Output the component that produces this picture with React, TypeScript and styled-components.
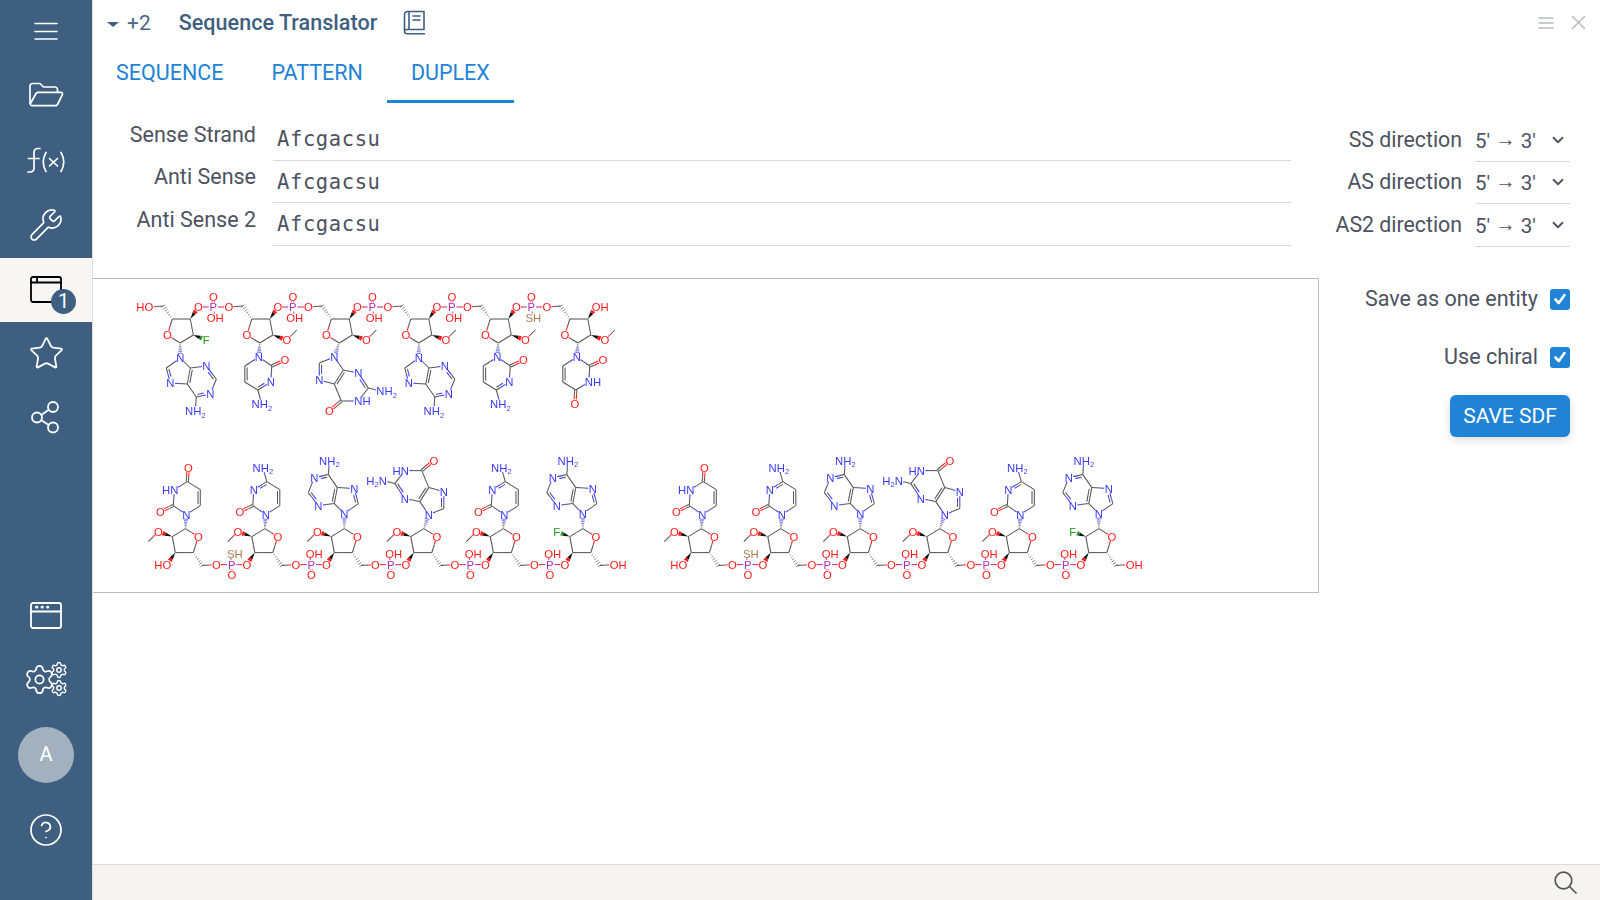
import { ReactNode } from 'react';
import styled, { createGlobalStyle } from 'styled-components';
import { ChevronDown, CircleHelp, Star, Wrench, Settings } from 'lucide-react';

const NAVY = '#3e5f80';
const BLUE = '#2083d5';
const TEXT = '#4d5261';
const LINE = '#d7d9df';

const GlobalStyle = createGlobalStyle`
  html, body {
    margin: 0;
    height: 100%;
    overflow: hidden;
    background: #fff;
    font-family: Roboto, "Liberation Sans", sans-serif;
    color: ${TEXT};
  }
`;

const Page = styled.div`
  display: flex;
  width: 1600px;
  height: 900px;
`;

const Sidebar = styled.nav`
  display: flex;
  flex-direction: column;
  justify-content: space-between;
  width: 93px;
  flex: none;
  background: ${NAVY};
  border-right: 1px solid #dedede;
  padding-bottom: 39px;
  box-sizing: border-box;
`;

const SideGroup = styled.div`
  display: flex;
  flex-direction: column;
`;

const SideItem = styled.div<{ $height?: number; $active?: boolean }>`
  position: relative;
  display: flex;
  align-items: center;
  justify-content: center;
  height: ${(p) => p.$height ?? 64.5}px;
  color: ${(p) => (p.$active ? '#000' : '#fff')};
  background: ${(p) => (p.$active ? '#f7f6f4' : 'transparent')};
`;

const Badge = styled.span`
  position: absolute;
  left: 51px;
  top: 31px;
  width: 25px;
  height: 25px;
  border-radius: 50%;
  background: ${NAVY};
  color: #fff;
  font-size: 20px;
  line-height: 25px;
  text-align: center;
`;

const Avatar = styled.div`
  width: 56px;
  height: 56px;
  border-radius: 50%;
  background: #a3b1be;
  color: #fff;
  font-size: 20px;
  line-height: 54px;
  text-align: center;
`;

const Main = styled.main`
  flex: 1;
  display: flex;
  flex-direction: column;
  min-width: 0;
`;

const TitleBar = styled.header`
  display: flex;
  align-items: center;
  height: 47px;
  padding: 0 0 2px 14px;
  box-sizing: border-box;
  color: ${NAVY};
`;

const Caret = styled.span`
  width: 0;
  height: 0;
  margin-top: 3px;
  border-left: 6px solid transparent;
  border-right: 6px solid transparent;
  border-top: 5px solid ${NAVY};
`;

const Count = styled.span`
  margin-left: 8px;
  font-size: 21px;
  color: #4a6784;
`;

const Title = styled.h1`
  margin: 0 0 0 28px;
  font-size: 21.6px;
  font-weight: 500;
`;

const BookSlot = styled.span`
  display: flex;
  margin-left: 26px;
`;

const WindowActions = styled.div`
  display: flex;
  align-items: center;
  gap: 17px;
  margin-left: auto;
  padding-right: 14px;
  color: #b9bbc2;
`;

const Tabs = styled.div`
  display: flex;
  height: 56px;
  margin-left: -1px;
`;

const Tab = styled.div<{ $active?: boolean }>`
  display: flex;
  align-items: center;
  padding: 0 24px 2px;
  font-size: 21.5px;
  color: ${BLUE};
  box-sizing: border-box;
  border-bottom: 3px solid ${(p) => (p.$active ? BLUE : 'transparent')};
`;

const Form = styled.section`
  display: flex;
  flex-direction: column;
  margin-top: 15.5px;
  padding-right: 30px;
`;

const FormRow = styled.div`
  display: grid;
  grid-template-columns: 180px 1018px 184px 95px;
  height: 42.5px;
`;

const FieldLabel = styled.label`
  padding: 1px 17px 0 0;
  font-size: 21.5px;
  line-height: 30px;
  text-align: right;
`;

const SequenceInput = styled.input`
  width: 1018px;
  height: 42px;
  box-sizing: border-box;
  border: 0;
  border-bottom: 1px solid ${LINE};
  outline: 0;
  padding: 0 0 0 4px;
  font-family: "DejaVu Sans Mono", "Liberation Mono", monospace;
  font-size: 20.5px;
  letter-spacing: 0.6px;
  color: ${TEXT};
`;

const DirectionLabel = styled(FieldLabel)`
  padding: 2px 13px 0 0;
  font-size: 21.3px;
  line-height: 38px;
`;

const Select = styled.div`
  display: flex;
  align-items: center;
  justify-content: space-between;
  height: 43px;
  box-sizing: border-box;
  border-bottom: 1px solid ${LINE};
  padding: 0 3px 0 0;
  font-size: 20.5px;
  white-space: pre;
`;

const Arrow = styled.span`
  vertical-align: 1.5px;
`;

const Workspace = styled.section`
  display: flex;
  margin-top: 31.5px;
`;

const Panel = styled.div`
  width: 1226px;
  height: 315px;
  box-sizing: border-box;
  border: 1px solid #b9bac2;
  border-left-width: 0;
`;

const MoleculeCanvas = styled.svg`
  display: block;
  filter: blur(0.4px);
`;

const AtomLabel = styled.text`
  font-family: "Liberation Sans", sans-serif;
  font-size: 11.3px;
`;

const Options = styled.div`
  flex: 1;
  display: flex;
  flex-direction: column;
  align-items: flex-end;
  padding-right: 30px;
  padding-top: 2.5px;
`;

const CheckRow = styled.div`
  display: flex;
  align-items: center;
  gap: 12px;
  height: 58px;
  margin-top: -11px;
  margin-bottom: 11px;
  font-size: 21.5px;
`;

const CheckBox = styled.span`
  display: flex;
  align-items: center;
  justify-content: center;
  width: 20px;
  height: 21px;
  border-radius: 3px;
  background: ${BLUE};
  margin-top: 2px;
`;

const SaveButton = styled.button`
  width: 120px;
  height: 42px;
  margin-top: -1px;
  border: 0;
  border-radius: 6px;
  background: ${BLUE};
  color: #fff;
  font-family: inherit;
  font-size: 21px;
  box-shadow: 0 3px 10px rgba(0, 0, 0, 0.14);
`;

const Spacer = styled.div`
  flex: 1;
`;

const StatusBar = styled.footer`
  display: flex;
  align-items: center;
  justify-content: flex-end;
  height: 35px;
  padding-right: 21px;
  border-top: 1px solid #dcdcdc;
  background: #f5f4f2;
  color: #555;
`;

/* ---- sidebar and header drawings ---- */

const Stroke = ({ w, h, sw = 1.7, children }: { w: number; h: number; sw?: number; children: ReactNode }) => (
  <svg width={w} height={h} viewBox={`0 0 ${w} ${h}`} fill="none" stroke="currentColor" strokeWidth={sw} strokeLinecap="round" strokeLinejoin="round">
    {children}
  </svg>
);

const MenuIcon = () => (
  <Stroke w={24} h={18} sw={1.6}>
    <path d="M1 1.5H23M1 9.5H23M1 17H23" />
  </Stroke>
);

const FolderIcon = () => (
  <Stroke w={35} h={25}>
    <path d="M1 21V4a2.5 2.5 0 0 1 2.5-2.5H11l3.5 3.5H26A2.5 2.5 0 0 1 28.5 7.5V10" />
    <path d="M1.2 22 7 11.5A2.5 2.5 0 0 1 9 10.3H32a1.6 1.6 0 0 1 1.4 2.3L28.5 22.5a2.5 2.5 0 0 1-2 1.2H3a2 2 0 0 1-1.8-1.7Z" />
  </Stroke>
);

const FunctionIcon = () => (
  <Stroke w={40} h={27}>
    <path d="M14 1.5h-2.5A3.5 3.5 0 0 0 8 5V21.5A3.5 3.5 0 0 1 4.5 25H2" />
    <path d="M2.5 11.5H13" />
    <path d="M20 5.5Q14.5 15 20 24.5M35 5.5Q40.5 15 35 24.5" />
    <path d="M23.5 11.5 31.5 19M31.5 11.5 23.5 19" />
  </Stroke>
);

const TaskbarIcon = () => (
  <Stroke w={32} h={27} sw={1.8}>
    <rect x="1" y="1" width="30" height="25" rx="2" />
    <path d="M1 6.5H31M7 1V6.5" />
  </Stroke>
);

const ShareIcon = () => (
  <Stroke w={34} h={34} sw={1.8}>
    <circle cx="24" cy="7" r="5" />
    <circle cx="8" cy="17.5" r="5" />
    <circle cx="24" cy="27.5" r="5" />
    <path d="M12.3 15 19.8 9.8M12.3 20.2 19.8 25" />
  </Stroke>
);

const BrowserIcon = () => (
  <Stroke w={32} h={27} sw={1.8}>
    <rect x="1" y="1" width="30" height="25" rx="2" />
    <path d="M1 9.5H31" />
    <path d="M6.5 5.2h.4M12 5.2h.4M17.5 5.2h.4" strokeWidth={2.8} />
  </Stroke>
);

const GearsSlot = styled.span`
  position: relative;
  display: block;
  width: 40px;
  height: 34px;
`;

const BigGear = styled.span`
  position: absolute;
  left: -3px;
  top: 1px;
  display: flex;
`;

const SmallGear = styled.span<{ $top: number }>`
  position: absolute;
  left: 24px;
  top: ${(p) => p.$top}px;
  display: flex;
`;

const GearsIcon = () => (
  <GearsSlot>
    <BigGear>
      <Settings size={33} strokeWidth={1.25} />
    </BigGear>
    <SmallGear $top={-1}>
      <Settings size={18} strokeWidth={1.9} />
    </SmallGear>
    <SmallGear $top={17}>
      <Settings size={18} strokeWidth={1.9} />
    </SmallGear>
  </GearsSlot>
);

const BookIcon = () => (
  <Stroke w={23} h={25} sw={1.6}>
    <path d="M1.5 21V4.5a3 3 0 0 1 3-3H21V19.5H4.5a3 3 0 0 0-3 1.5 2.3 2.3 0 0 0 2.3 2.7H21.5" />
    <path d="M6 2V19M10 6H17M10 10H17" />
  </Stroke>
);

const SearchIcon = () => (
  <Stroke w={26} h={26} sw={1.7}>
    <circle cx="10.5" cy="10.5" r="8.3" />
    <path d="M16.5 16.5 23 23" />
  </Stroke>
);

/* ---- molecule drawing ---- */

type El = 'C' | 'O' | 'N' | 'P' | 'F' | 'S';
type Anchor = 'start' | 'middle' | 'end';

interface Atom {
  x: number;
  y: number;
  el: El;
  label?: string;
  flipLabel?: string;
  anchor?: Anchor;
  flipAnchor?: Anchor;
  flipDx?: number;
  hidden?: boolean;
}

type Bond = [string, string, ('s' | 'd' | 'w' | 'h')?, [number, number]?];

const EL_COLORS: Record<El, string> = {
  C: '#555',
  O: '#ff1a1a',
  N: '#3a3aff',
  P: '#b02fb0',
  F: '#1f9a1f',
  S: '#a97c50',
};

const UNIT_STEP = 79.5;

const HEX: [number, number] = [28, 62];
const FIVE: [number, number] = [4, 56];

const ADENINE: { atoms: Record<string, Atom>; bonds: Bond[] } = {
  atoms: {
    N9: { x: 8, y: 39, el: 'N', label: 'N' },
    C8: { x: -6, y: 49, el: 'C' },
    N7: { x: -2, y: 64, el: 'N', label: 'N' },
    C5b: { x: 15, y: 65, el: 'C' },
    C4b: { x: 18, y: 49, el: 'C' },
    N3: { x: 34, y: 47, el: 'N', label: 'N' },
    C2b: { x: 44, y: 60, el: 'C' },
    N1: { x: 38, y: 75, el: 'N', label: 'N' },
    C6: { x: 24, y: 78, el: 'C' },
    N6: { x: 23, y: 92, el: 'N', label: 'NH2' },
  },
  bonds: [
    ['N9', 'C8'],
    ['C8', 'N7', 'd', FIVE],
    ['N7', 'C5b'],
    ['C5b', 'C4b', 'd', HEX],
    ['C4b', 'N9'],
    ['C4b', 'N3'],
    ['N3', 'C2b', 'd', HEX],
    ['C2b', 'N1'],
    ['N1', 'C6', 'd', HEX],
    ['C6', 'C5b'],
    ['C6', 'N6'],
  ],
};

const GUANINE: { atoms: Record<string, Atom>; bonds: Bond[] } = {
  atoms: {
    N9: { x: 3, y: 38, el: 'N', label: 'N' },
    C8: { x: -12, y: 44, el: 'C' },
    N7: { x: -12, y: 61, el: 'N', label: 'N' },
    C5b: { x: 3, y: 65, el: 'C' },
    C4b: { x: 12, y: 51, el: 'C' },
    N3: { x: 27, y: 54, el: 'N', label: 'N' },
    C2b: { x: 37, y: 69, el: 'C' },
    N1: { x: 27, y: 82, el: 'N', label: 'NH', flipLabel: 'HN', anchor: 'start', flipAnchor: 'end' },
    C6: { x: 10, y: 82, el: 'C' },
    O6: { x: -2, y: 92, el: 'O', label: 'O' },
    N2: { x: 49, y: 72, el: 'N', label: 'NH2', flipLabel: 'H2N', anchor: 'start', flipAnchor: 'end' },
  },
  bonds: [
    ['N9', 'C8'],
    ['C8', 'N7', 'd', [-4, 52]],
    ['N7', 'C5b'],
    ['C5b', 'C4b', 'd', [20, 68]],
    ['C4b', 'N9'],
    ['C4b', 'N3'],
    ['N3', 'C2b', 'd', [20, 68]],
    ['C2b', 'N1'],
    ['C2b', 'N2'],
    ['N1', 'C6'],
    ['C6', 'C5b'],
    ['C6', 'O6', 'd'],
  ],
};

const pyrimidine = (uracil: boolean): { atoms: Record<string, Atom>; bonds: Bond[] } => {
  const ring: [number, number] = [6, 55];
  return {
    atoms: {
      N1: { x: 7, y: 38, el: 'N', label: 'N' },
      C2b: { x: 20, y: 47, el: 'C' },
      O2b: { x: 33, y: 41, el: 'O', label: 'O' },
      N3: uracil
        ? { x: 19, y: 63, el: 'N', label: 'NH', flipLabel: 'HN', anchor: 'start', flipAnchor: 'end' }
        : { x: 19, y: 63, el: 'N', label: 'N' },
      C4b: { x: 6, y: 71, el: 'C' },
      X4: uracil ? { x: 5, y: 85, el: 'O', label: 'O' } : { x: 10, y: 85, el: 'N', label: 'NH2' },
      C5b: { x: -7, y: 63, el: 'C' },
      C6: { x: -7, y: 47, el: 'C' },
    },
    bonds: [
      ['N1', 'C2b'],
      ['C2b', 'O2b', 'd'],
      ['C2b', 'N3'],
      uracil ? ['N3', 'C4b'] : ['N3', 'C4b', 'd', ring],
      uracil ? ['C4b', 'X4', 'd'] : ['C4b', 'X4'],
      ['C4b', 'C5b'],
      ['C5b', 'C6', 'd', ring],
      ['C6', 'N1'],
    ],
  };
};

const UNITS = [
  { base: ADENINE, baseN: 'N9', fluoro: true, thio: false },
  { base: pyrimidine(false), baseN: 'N1', fluoro: false, thio: false },
  { base: GUANINE, baseN: 'N9', fluoro: false, thio: false },
  { base: ADENINE, baseN: 'N9', fluoro: false, thio: false },
  { base: pyrimidine(false), baseN: 'N1', fluoro: false, thio: true },
  { base: pyrimidine(true), baseN: 'N1', fluoro: false, thio: false },
];

const buildUnit = (index: number) => {
  const unit = UNITS[index];
  const last = index === UNITS.length - 1;
  const atoms: Record<string, Atom> = {
    C5: { x: -9, y: -13, el: 'C' },
    C4: { x: 0, y: 0, el: 'C' },
    O4: { x: -5, y: 16, el: 'O', label: 'O' },
    C1: { x: 8, y: 24, el: 'C' },
    C2: { x: 21, y: 16, el: 'C' },
    C3: { x: 18, y: 0, el: 'C' },
    O3: last
      ? { x: 26, y: -12, el: 'O', label: 'OH', flipLabel: 'HO', anchor: 'start', flipAnchor: 'end' }
      : { x: 26, y: -12, el: 'O', label: 'O' },
    O5:
      index === 0
        ? { x: -23, y: -12, el: 'O', label: 'HO', flipLabel: 'OH', anchor: 'end', flipAnchor: 'start' }
        : { x: -23, y: -12, el: 'O', label: 'O', hidden: true },
    ...unit.base.atoms,
  };
  const bonds: Bond[] = [
    ['C4', 'C5', 'h'],
    ['C5', 'O5'],
    ['C4', 'O4'],
    ['O4', 'C1'],
    ['C1', 'C2'],
    ['C2', 'C3'],
    ['C3', 'C4'],
    ['C3', 'O3', 'w'],
    ['C1', unit.baseN, 'h'],
    ...unit.base.bonds,
  ];
  if (unit.fluoro) {
    atoms.X2 = { x: 34, y: 21, el: 'F', label: 'F' };
    bonds.push(['C2', 'X2', 'w']);
  } else {
    atoms.X2 = { x: 35, y: 21, el: 'O', label: 'O' };
    atoms.Me = { x: 45, y: 11, el: 'C' };
    bonds.push(['C2', 'X2', 'w'], ['X2', 'Me']);
  }
  if (!last) {
    atoms.P = { x: 41, y: -12, el: 'P', label: 'P' };
    atoms.OP = { x: 41, y: -22, el: 'O', label: 'O' };
    atoms.XP = unit.thio
      ? { x: 43, y: -1, el: 'S', label: 'SH', flipDx: 5 }
      : { x: 43, y: -1, el: 'O', label: 'OH', flipDx: 5 };
    atoms.O5n = { x: 56.5, y: -12, el: 'O', label: 'O' };
    bonds.push(['O3', 'P'], ['P', 'OP', 'd'], ['P', 'XP'], ['P', 'O5n']);
  }
  return { atoms, bonds };
};

const renderLabel = (text: string) =>
  text.split('').map((ch, i) =>
    /\d/.test(ch) ? (
      <tspan key={i} fontSize="7.5" dy="2.5">
        {ch}
      </tspan>
    ) : (
      <tspan key={i} dy={i > 0 && /\d/.test(text[i - 1]) ? -2.5 : 0}>
        {ch}
      </tspan>
    ),
  );

const BOND_WIDTH = 1.05;

const Strand = ({ ox, oy, flip }: { ox: number; oy: number; flip?: boolean }) => {
  const items: ReactNode[] = [];
  UNITS.forEach((_, index) => {
    const { atoms, bonds } = buildUnit(index);
    const place = (x: number, y: number): [number, number] =>
      flip ? [ox - (UNIT_STEP * index + x), oy - y] : [ox + UNIT_STEP * index + x, oy + y];

    bonds.forEach(([aKey, bKey, kind = 's', center], bi) => {
      const a = atoms[aKey];
      const b = atoms[bKey];
      const [ax0, ay0] = place(a.x, a.y);
      const [bx0, by0] = place(b.x, b.y);
      const len = Math.hypot(bx0 - ax0, by0 - ay0);
      const ux = (bx0 - ax0) / len;
      const uy = (by0 - ay0) / len;
      const trimA = a.label ? 4.6 : 0;
      const trimB = b.label ? 4.6 : 0;
      const ax = ax0 + ux * trimA;
      const ay = ay0 + uy * trimA;
      const bx = bx0 - ux * trimB;
      const by = by0 - uy * trimB;
      const mx = (ax0 + bx0) / 2;
      const my = (ay0 + by0) / 2;
      const nx = -uy;
      const ny = ux;
      const ca = EL_COLORS[a.el];
      const cb = EL_COLORS[b.el];
      const key = `${ox}-${index}-${bi}`;

      const halves = (x1: number, y1: number, x2: number, y2: number, k: string) => {
        const hx = (x1 + x2) / 2;
        const hy = (y1 + y2) / 2;
        return [
          <line key={`${k}a`} x1={x1} y1={y1} x2={hx} y2={hy} stroke={ca} strokeWidth={BOND_WIDTH} />,
          <line key={`${k}b`} x1={hx} y1={hy} x2={x2} y2={y2} stroke={cb} strokeWidth={BOND_WIDTH} />,
        ];
      };

      if (kind === 's') {
        items.push(
          <line key={`${key}a`} x1={ax} y1={ay} x2={mx} y2={my} stroke={ca} strokeWidth={BOND_WIDTH} />,
          <line key={`${key}b`} x1={mx} y1={my} x2={bx} y2={by} stroke={cb} strokeWidth={BOND_WIDTH} />,
        );
      } else if (kind === 'd') {
        if (center) {
          const [cx, cy] = place(center[0], center[1]);
          const side = (cx - mx) * nx + (cy - my) * ny > 0 ? 1 : -1;
          const off = 2.3 * side;
          items.push(...halves(ax, ay, bx, by, key));
          items.push(
            ...halves(
              ax + nx * off + ux * 1.6,
              ay + ny * off + uy * 1.6,
              bx + nx * off - ux * 1.6,
              by + ny * off - uy * 1.6,
              `${key}i`,
            ),
          );
        } else {
          items.push(...halves(ax + nx * 1.1, ay + ny * 1.1, bx + nx * 1.1, by + ny * 1.1, `${key}l`));
          items.push(...halves(ax - nx * 1.1, ay - ny * 1.1, bx - nx * 1.1, by - ny * 1.1, `${key}r`));
        }
      } else if (kind === 'w') {
        const w = 2.4;
        const hw = w * (Math.hypot(mx - ax, my - ay) / Math.hypot(bx - ax, by - ay));
        items.push(
          <polygon
            key={`${key}a`}
            points={`${ax},${ay} ${mx + nx * hw},${my + ny * hw} ${mx - nx * hw},${my - ny * hw}`}
            fill="#111"
          />,
          <polygon
            key={`${key}b`}
            points={`${mx + nx * hw},${my + ny * hw} ${bx + nx * w},${by + ny * w} ${bx - nx * w},${by - ny * w} ${mx - nx * hw},${my - ny * hw}`}
            fill={cb}
          />,
        );
      } else {
        const steps = 6;
        for (let s = 1; s <= steps; s++) {
          const t = s / steps;
          const px = ax + (bx - ax) * t;
          const py = ay + (by - ay) * t;
          const half = 0.4 + 1.9 * t;
          items.push(
            <line
              key={`${key}h${s}`}
              x1={px + nx * half}
              y1={py + ny * half}
              x2={px - nx * half}
              y2={py - ny * half}
              stroke={t > 0.5 ? cb : ca}
              strokeWidth={0.7}
            />,
          );
        }
      }
    });

    Object.entries(atoms).forEach(([name, atom]) => {
      if (!atom.label || atom.hidden) return;
      const [x, y] = place(atom.x, atom.y);
      const text = flip ? atom.flipLabel ?? atom.label : atom.label;
      const anchor = (flip ? atom.flipAnchor ?? atom.anchor : atom.anchor) ?? 'middle';
      const nudge = anchor === 'start' ? -4 : anchor === 'end' ? 4 : 0;
      items.push(
        <AtomLabel
          key={`${ox}-${index}-${name}`}
          x={x + nudge + (flip ? atom.flipDx ?? 0 : 0)}
          y={y + 4}
          textAnchor={anchor}
          fill={EL_COLORS[atom.el]}
        >
          {renderLabel(text)}
        </AtomLabel>,
      );
    });
  });
  return <g>{items}</g>;
};

const FIELDS = [
  { label: 'Sense Strand', direction: 'SS direction' },
  { label: 'Anti Sense', direction: 'AS direction' },
  { label: 'Anti Sense 2', direction: 'AS2 direction' },
];

const Check = () => (
  <svg width="14" height="14" viewBox="0 0 14 14" fill="none" stroke="#fff" strokeWidth="2.6" strokeLinecap="round" strokeLinejoin="round">
    <path d="M2.5 7.5 5.8 11 11.5 3" />
  </svg>
);

const App = () => {
  return (
    <Page>
      <GlobalStyle />
      <Sidebar>
        <SideGroup>
          <SideItem $height={62}><MenuIcon /></SideItem>
          <SideItem $height={65.5}><FolderIcon /></SideItem>
          <SideItem $height={65.5}><FunctionIcon /></SideItem>
          <SideItem><Wrench size={36} strokeWidth={1.1} /></SideItem>
          <SideItem $active>
            <TaskbarIcon />
            <Badge>1</Badge>
          </SideItem>
          <SideItem $height={63}><Star size={37} strokeWidth={1.15} /></SideItem>
          <SideItem $height={63}><ShareIcon /></SideItem>
        </SideGroup>
        <SideGroup>
          <SideItem $height={64}><BrowserIcon /></SideItem>
          <SideItem $height={64}><GearsIcon /></SideItem>
          <SideItem $height={88}><Avatar>A</Avatar></SideItem>
          <SideItem $height={62}><CircleHelp size={36} strokeWidth={1.15} /></SideItem>
        </SideGroup>
      </Sidebar>
      <Main>
        <TitleBar>
          <Caret />
          <Count>+2</Count>
          <Title>Sequence Translator</Title>
          <BookSlot><BookIcon /></BookSlot>
          <WindowActions>
            <Stroke w={16} h={14} sw={1.6}>
              <path d="M1 2H15M1 7H15M1 12H15" />
            </Stroke>
            <Stroke w={15} h={15} sw={1.5}>
              <path d="M1.5 1.5 13.5 13.5M13.5 1.5 1.5 13.5" />
            </Stroke>
          </WindowActions>
        </TitleBar>
        <Tabs>
          <Tab>SEQUENCE</Tab>
          <Tab>PATTERN</Tab>
          <Tab $active>DUPLEX</Tab>
        </Tabs>
        <Form>
          {FIELDS.map((field) => (
            <FormRow key={field.label}>
              <FieldLabel>{field.label}</FieldLabel>
              <SequenceInput defaultValue="Afcgacsu" />
              <DirectionLabel>{field.direction}</DirectionLabel>
              <Select>
                <span>{"5' "}<Arrow>→</Arrow>{" 3'"}</span>
                <ChevronDown size={18} strokeWidth={2.4} />
              </Select>
            </FormRow>
          ))}
        </Form>
        <Workspace>
          <Panel>
            <MoleculeCanvas width={1225} height={313} viewBox="93 279 1225 313">
              <Strand ox={172.3} oy={319} />
              <Strand ox={590.8} oy={552.6} flip />
              <Strand ox={1106.8} oy={552.6} flip />
            </MoleculeCanvas>
          </Panel>
          <Options>
            <CheckRow>
              Save as one entity
              <CheckBox><Check /></CheckBox>
            </CheckRow>
            <CheckRow>
              Use chiral
              <CheckBox><Check /></CheckBox>
            </CheckRow>
            <SaveButton>SAVE SDF</SaveButton>
          </Options>
        </Workspace>
        <Spacer />
        <StatusBar><SearchIcon /></StatusBar>
      </Main>
    </Page>
  );
};

export default App;
